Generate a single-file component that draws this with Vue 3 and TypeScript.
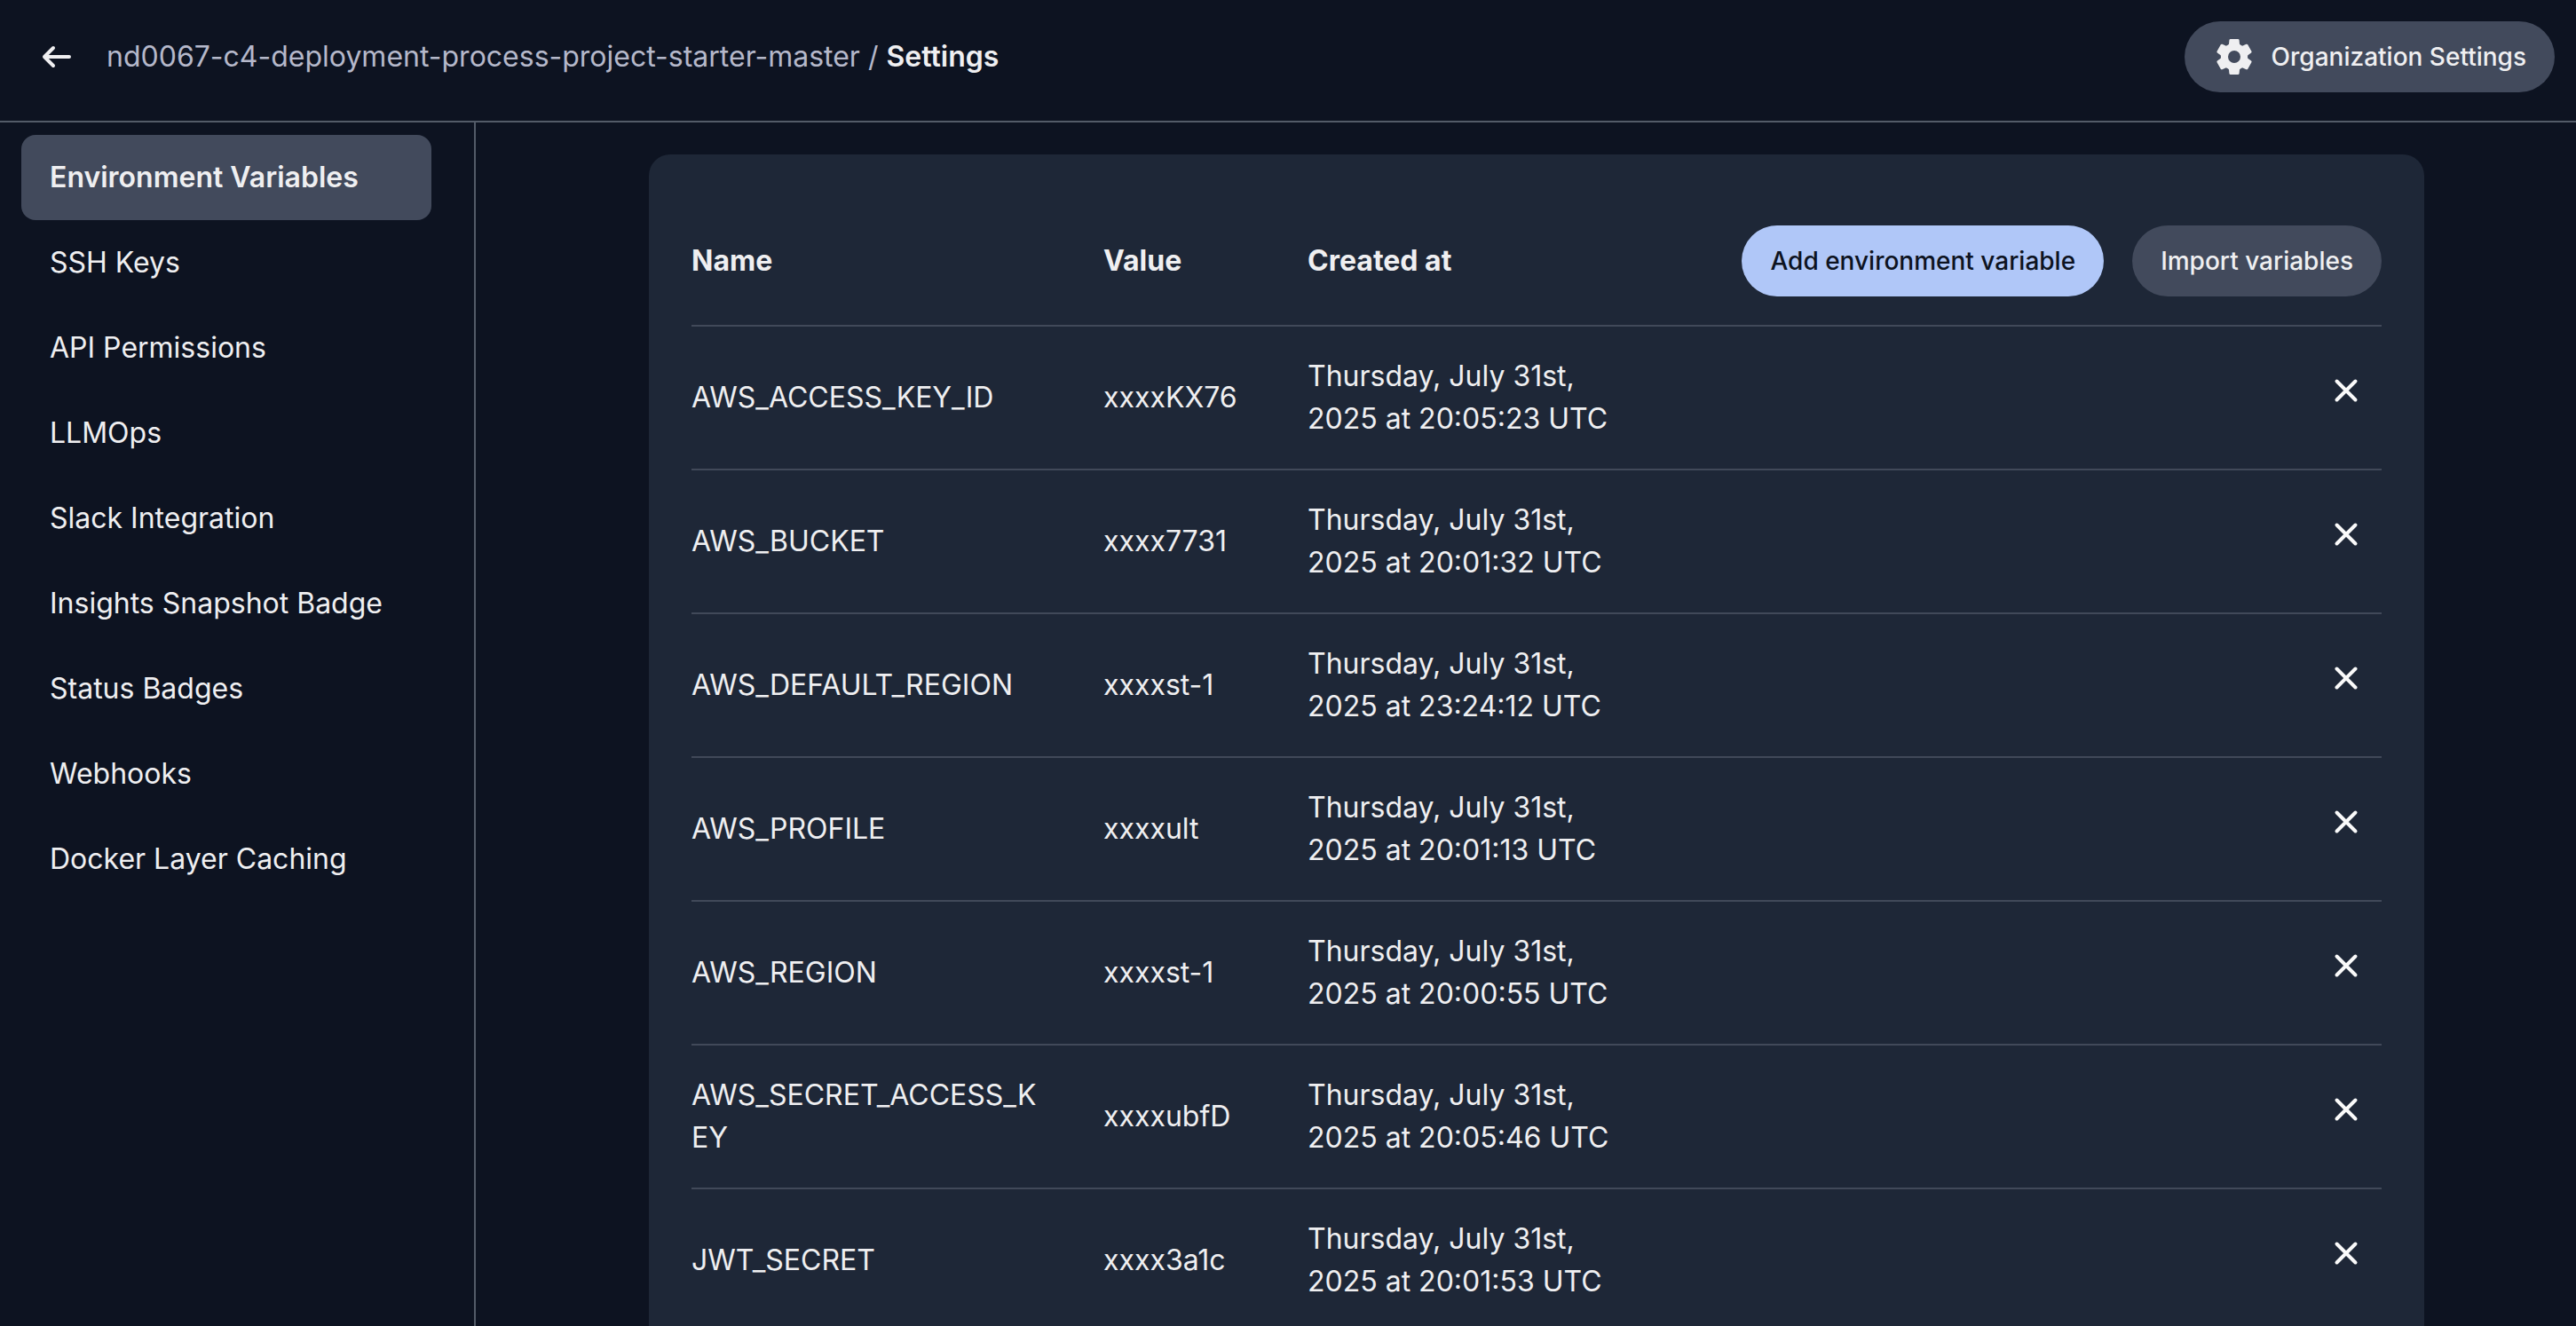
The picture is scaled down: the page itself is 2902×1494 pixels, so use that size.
<script setup lang="ts">
interface EnvVariable {
  name: string
  value: string
  createdAt: string
}

const project = 'nd0067-c4-deployment-process-project-starter-master'

const sections: string[] = [
  'Environment Variables',
  'SSH Keys',
  'API Permissions',
  'LLMOps',
  'Slack Integration',
  'Insights Snapshot Badge',
  'Status Badges',
  'Webhooks',
  'Docker Layer Caching',
]

const variables: EnvVariable[] = [
  { name: 'AWS_ACCESS_KEY_ID', value: 'xxxxKX76', createdAt: 'Thursday, July 31st, 2025 at 20:05:23 UTC' },
  { name: 'AWS_BUCKET', value: 'xxxx7731', createdAt: 'Thursday, July 31st, 2025 at 20:01:32 UTC' },
  { name: 'AWS_DEFAULT_REGION', value: 'xxxxst-1', createdAt: 'Thursday, July 31st, 2025 at 23:24:12 UTC' },
  { name: 'AWS_PROFILE', value: 'xxxxult', createdAt: 'Thursday, July 31st, 2025 at 20:01:13 UTC' },
  { name: 'AWS_REGION', value: 'xxxxst-1', createdAt: 'Thursday, July 31st, 2025 at 20:00:55 UTC' },
  { name: 'AWS_SECRET_ACCESS_KEY', value: 'xxxxubfD', createdAt: 'Thursday, July 31st, 2025 at 20:05:46 UTC' },
  { name: 'JWT_SECRET', value: 'xxxx3a1c', createdAt: 'Thursday, July 31st, 2025 at 20:01:53 UTC' },
]

const toothAngles: number[] = [0, 60, 120, 180, 240, 300]
</script>

<template>
  <div class="app">
    <header class="topbar">
      <a class="back" href="#" aria-label="Back">
        <svg class="icon" viewBox="0 0 48 48" fill="none" stroke="currentColor" stroke-width="4" stroke-linecap="round" stroke-linejoin="round">
          <path d="M38 24H10M20 14L10 24L20 34" />
        </svg>
      </a>
      <nav class="crumbs" aria-label="Breadcrumb">
        <a class="crumb" href="#">{{ project }}</a>
        <span class="slash">/</span>
        <span class="current">Settings</span>
      </nav>
      <button class="pill" type="button">
        <svg class="icon" viewBox="-12 -12 24 24" fill="currentColor" aria-hidden="true">
          <circle r="5.5" fill="none" stroke="currentColor" stroke-width="4" />
          <path
            v-for="angle in toothAngles"
            :key="angle"
            :transform="`rotate(${angle})`"
            d="M-3.8 -5.4L-3.7 -6.6Q-3.1 -6.7 -3 -7.3L-2.8 -9.4Q-2.7 -10 -2.1 -10H2.1Q2.7 -10 2.8 -9.4L3 -7.3Q3.1 -6.7 3.7 -6.6L3.8 -5.4Z"
          />
        </svg>
        Organization Settings
      </button>
    </header>

    <div class="body">
      <nav class="sidebar" aria-label="Project settings">
        <a
          v-for="(section, index) in sections"
          :key="section"
          class="section"
          :class="{ active: index === 0 }"
          :aria-current="index === 0 ? 'page' : undefined"
          href="#"
        >{{ section }}</a>
      </nav>

      <main class="content">
        <section class="card">
          <table class="vars">
            <colgroup>
              <col class="col-name" />
              <col class="col-value" />
              <col class="col-created" />
              <col />
            </colgroup>
            <thead>
              <tr>
                <th scope="col">Name</th>
                <th scope="col">Value</th>
                <th scope="col">Created at</th>
                <td class="tools">
                  <div class="actions">
                    <button class="pill primary" type="button">Add environment variable</button>
                    <button class="pill" type="button">Import variables</button>
                  </div>
                </td>
              </tr>
            </thead>
            <tbody>
              <tr v-for="variable in variables" :key="variable.name">
                <td>{{ variable.name }}</td>
                <td>{{ variable.value }}</td>
                <td>{{ variable.createdAt }}</td>
                <td class="tools">
                  <div class="actions">
                    <button class="remove" type="button" :aria-label="`Delete ${variable.name}`">
                      <svg class="icon" viewBox="0 0 48 48" fill="none" stroke="currentColor" stroke-width="4" stroke-linecap="round">
                        <path d="M13.5 13.5L34.5 34.5M34.5 13.5L13.5 34.5" />
                      </svg>
                    </button>
                  </div>
                </td>
              </tr>
            </tbody>
          </table>
        </section>
      </main>
    </div>
  </div>
</template>

<style>
body {
  background: #0d1321;
}
</style>

<style scoped>
.app {
  display: flex;
  flex-direction: column;
  height: 100vh;
  box-sizing: border-box;
  background: #0d1321;
  color: #efeff1;
  font-family: Inter, "Liberation Sans", sans-serif;
  font-size: 32px;
  line-height: 48px;
}

a {
  color: inherit;
  text-decoration: none;
}

.icon {
  display: block;
  flex: none;
  width: 48px;
  height: 48px;
}

.topbar {
  display: flex;
  flex: none;
  align-items: center;
  padding: 24px 24px 32px 40px;
  border-bottom: 2px solid #535b68;
}

.crumbs {
  display: flex;
  flex: 1;
  gap: 9px;
  padding-left: 32px;
}

.crumb,
.slash {
  color: #b5b8ca;
}

.current {
  font-weight: 600;
}

.pill {
  display: flex;
  align-items: center;
  gap: 18px;
  height: 80px;
  padding: 0 32px;
  border: 0;
  border-radius: 40px;
  background: #424a5c;
  color: #efeff1;
  font-family: inherit;
  font-size: 28px;
  font-weight: 500;
  white-space: nowrap;
}

.pill.primary {
  background: #b0c7f8;
  color: #0d1321;
}

.body {
  display: flex;
  flex: 1;
  min-height: 0;
}

.sidebar {
  flex: none;
  box-sizing: border-box;
  width: 536px;
  padding: 14px 48px 0 24px;
  border-right: 2px solid #535b68;
}

.section {
  display: block;
  padding: 24px 32px;
  border-radius: 16px;
}

.section.active {
  background: #424a5c;
  font-weight: 600;
}

.content {
  flex: 1;
  min-width: 0;
  padding: 36px 0 48px 24px;
  overflow-y: auto;
  scrollbar-width: none;
}

.card {
  box-sizing: border-box;
  max-width: 2000px;
  margin: 0 auto;
  padding: 48px;
  border-radius: 24px;
  background: #1e2737;
}

.vars {
  width: 100%;
  border-collapse: separate;
  border-spacing: 0;
  table-layout: fixed;
}

.col-name {
  width: 464px;
}

.col-value {
  width: 230px;
}

.col-created {
  width: 440px;
}

th,
td {
  padding: 32px 72px 32px 0;
  text-align: left;
  vertical-align: middle;
  overflow-wrap: anywhere;
}

th {
  font-weight: 700;
}

tbody td {
  border-top: 2px solid #414959;
}

.tools {
  padding-right: 0;
  vertical-align: top;
}

.actions {
  display: flex;
  justify-content: flex-end;
  gap: 32px;
}

.remove {
  display: flex;
  align-items: center;
  justify-content: center;
  width: 80px;
  height: 80px;
  padding: 0;
  border: 0;
  background: transparent;
  color: #fafafa;
}
</style>
